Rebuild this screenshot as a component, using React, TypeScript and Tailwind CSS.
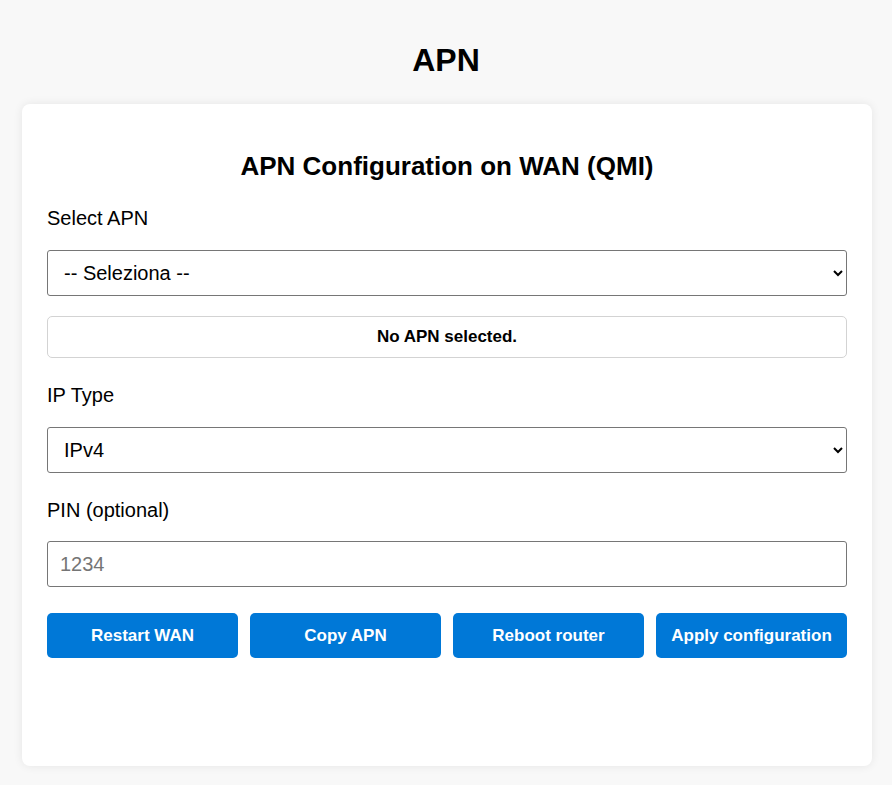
import React from "react";

export default function App() {
  const buttons = ["Restart WAN", "Copy APN", "Reboot router", "Apply configuration"];
  return (
    <div className="min-h-[785px] bg-[#f8f8f8] font-['Liberation_Sans',Arial,sans-serif] text-black">
      <h1 className="pt-[42px] text-center text-[32px] font-bold leading-[37px]">APN</h1>
      <div className="ml-[22px] mt-[25px] w-[850px] rounded-[8px] bg-white px-[25px] pt-[47px] pb-[108px] shadow-[0_0_10px_rgba(0,0,0,0.08)]">
        <h2 className="text-center text-[26px] font-bold leading-[30px]">APN Configuration on WAN (QMI)</h2>
        <label className="mt-[26px] block text-[20px] leading-[23px]">Select APN</label>
        <select className="mt-[20px] block h-[46px] w-full rounded-[3px] border border-[#767676] bg-white px-[12px] text-[20px]">
          <option>-- Seleziona --</option>
        </select>
        <div className="mt-[20px] flex h-[42px] items-center justify-center rounded-[5px] border border-[#d3d3d3] text-[17px] font-bold">
          No APN selected.
        </div>
        <label className="mt-[26px] block text-[20px] leading-[22px]">IP Type</label>
        <select className="mt-[21px] block h-[46px] w-full rounded-[3px] border border-[#767676] bg-white px-[12px] text-[20px]">
          <option>IPv4</option>
          <option>IPv6</option>
          <option>IPv4v6</option>
        </select>
        <label className="mt-[26px] block text-[20px] leading-[22px]">PIN (optional)</label>
        <input
          className="mt-[20px] block h-[46px] w-full rounded-[3px] border border-[#767676] bg-white px-[12px] text-[20px] placeholder:text-[#757575]"
          placeholder="1234"
        />
        <div className="mt-[26px] grid grid-cols-4 gap-[12px]">
          {buttons.map((b) => (
            <button
              key={b}
              className="h-[45px] rounded-[5px] bg-[#0078d7] text-[17px] font-bold text-white"
            >
              {b}
            </button>
          ))}
        </div>
      </div>
    </div>
  );
}
